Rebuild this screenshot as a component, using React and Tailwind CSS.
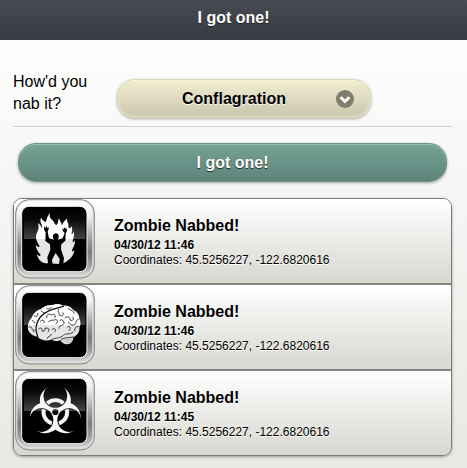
import React from "react";

function IconFrame({ id, label, children }) {
  return (
    <svg viewBox="15 12 240 240" role="img" aria-label={label} className="size-20 shrink-0">
      <defs>
        <linearGradient id={`${id}-metal`} x1="0" y1="0" x2="0" y2="1">
          <stop offset="0" stopColor="#ffffff" />
          <stop offset="0.2" stopColor="#f0f0f0" />
          <stop offset="0.5" stopColor="#a2a2a4" />
          <stop offset="0.68" stopColor="#7c7c7e" />
          <stop offset="0.85" stopColor="#9c9c9e" />
          <stop offset="1" stopColor="#d4d4d4" />
        </linearGradient>
        <linearGradient id={`${id}-gloss`} x1="0" y1="0" x2="0" y2="1">
          <stop offset="0" stopColor="#000000" />
          <stop offset="0.35" stopColor="#080808" />
          <stop offset="1" stopColor="#454545" />
        </linearGradient>
        <linearGradient id={`${id}-ink`} gradientUnits="userSpaceOnUse" x1="0" y1="132" x2="0" y2="133">
          <stop offset="0" stopColor="#ffffff" />
          <stop offset="1" stopColor="#e6e6e6" />
        </linearGradient>
      </defs>
      <rect x="17" y="14" width="236" height="235" rx="40" fill="#d8d8d6" stroke="#858585" strokeWidth="3" />
      <rect x="21" y="17" width="227" height="225" rx="37" fill={`url(#${id}-metal)`} stroke="#e6e6e6" strokeWidth="2" />
      <rect x="35" y="34" width="196" height="196" rx="22" fill="#000000" stroke="#f4f4f4" strokeWidth="3" />
      <path d="M42 132V58Q42 40 60 40H208Q226 40 226 58V132Z" fill={`url(#${id}-gloss)`} />
      {children}
    </svg>
  );
}

function FireIcon() {
  return (
    <IconFrame id="fire" label="Conflagration">
      <path
        fill="url(#fire-ink)"
        d="M106 205C92 202 84 192 80 177C87 184 90 184 92 180C82 168 77 160 77 148C81 156 87 158 89 154C80 138 74 128 81 113C85 106 88 98 84 84C92 90 95 96 95 102C97 96 96 90 92 82C90 76 92 71 94 68C96 76 103 78 106 82C111 76 109 67 120 54C117 66 121 70 127 75C135 84 133 88 139 90C147 85 142 79 147 70C149 79 155 82 155 90C160 88 156 86 161 82C164 75 168 76 172 68C168 80 178 84 175 95C179 102 182 101 184 93C190 103 184 110 185 118C188 117 190 113 190 108C196 122 188 132 188 142C191 142 193 139 195 136C196 152 188 158 185 169C189 170 191 167 193 164C192 180 182 190 174 196C168 203 158 205 152 207Z"
      />
      <path
        fill="#000000"
        d="M103 92L107 100L109 92L112 99L116 97L116 103L113 110L117 130L132 134C128 130 128 119 132 117Q138 113 144 117C147 121 147 129 143 134L158 130L164 114L158 107L157 99L161 104L162 96L166 102L169 97L171 107L167 116L166 137L154 148L153 163L162 190L160 204L164 209H147L149 192L137 174L126 194L128 209H108L114 204L112 187L121 164L120 148L106 138L107 112L102 104Z"
      />
    </IconFrame>
  );
}

function BrainIcon() {
  return (
    <IconFrame id="brain" label="Brain">
      <path
        fill="url(#brain-ink)"
        d="M54 146C52 132 57 118 65 110C70 97 81 87 92 85C100 75 116 71 127 72C138 67 152 68 159 74C172 72 184 79 190 87C202 92 208 102 208 113C214 122 211 136 208 142C210 153 200 165 190 169C190 181 182 190 172 190C162 191 155 184 151 178C142 181 133 180 124 176C110 181 92 178 83 167C72 166 59 158 54 146Z"
      />
      <g fill="none" stroke="#181818" strokeWidth="2.5" strokeLinecap="round" strokeLinejoin="round">
        <path strokeWidth="4" d="M83 167C75 148 77 126 91 108C109 87 133 84 160 76" />
        <path d="M57 138C63 135 66 140 67 146M66 117C70 118 69 126 75 126M71 153C66 148 73 144 76 149M72 104C80 109 84 106 83 97M94 90C102 94 98 98 104 96M110 82C116 87 122 82 125 79" />
        <path d="M91 121C98 112 107 121 101 126M86 144C93 137 98 143 96 150C105 153 107 146 104 142C116 139 121 145 114 153M110 110C108 101 119 96 124 102C132 97 140 103 134 110M116 122C121 114 130 120 135 116C144 115 145 123 138 129M147 84C139 91 150 94 147 101C154 109 164 102 159 95M175 82C181 90 193 87 192 97M165 111C173 103 182 109 180 117C189 122 193 113 188 108M150 119C155 111 163 120 162 128C156 137 145 132 147 142M205 115C195 118 201 126 193 131C184 135 178 128 176 123M208 137C198 134 192 142 195 149M172 138C180 132 185 143 177 149M127 145C134 139 141 147 134 153M112 172C113 163 123 169 124 160M124 176C143 168 149 173 160 163C169 155 179 163 190 153M151 178C157 169 176 171 190 168" />
      </g>
      <g fill="none" stroke="#777777" strokeWidth="1">
        <path d="M156 178C166 176 177 175 188 174M160 183C169 180 179 179 187 178M164 187L181 183" />
      </g>
    </IconFrame>
  );
}

const ANGLES = [0, 120, 240];

function BiohazardIcon() {
  return (
    <IconFrame id="bio" label="Biohazard">
      <defs>
        <mask id="bio-horns" maskUnits="userSpaceOnUse" x="-30" y="-30" width="60" height="60">
          {ANGLES.map((a) => (
            <circle key={a} cy="-11" r="15" fill="white" transform={`rotate(${a})`} />
          ))}
          {ANGLES.map((a) => (
            <circle key={a} cy="-15.5" r="11.5" fill="black" transform={`rotate(${a})`} />
          ))}
          <circle r="3" fill="black" />
        </mask>
        <mask id="bio-ring" maskUnits="userSpaceOnUse" x="-30" y="-30" width="60" height="60">
          {ANGLES.map((a) => (
            <circle key={a} cy="-15.5" r="10.6" fill="white" transform={`rotate(${a})`} />
          ))}
        </mask>
      </defs>
      <g transform="translate(136 135) scale(3.1)">
        <rect x="-30" y="-30" width="60" height="60" fill="#f8f8f8" mask="url(#bio-horns)" />
        <g mask="url(#bio-ring)">
          <circle r="11.5" fill="none" stroke="#f4f4f4" strokeWidth="3.8" />
        </g>
      </g>
    </IconFrame>
  );
}

const ENTRIES = [
  { Icon: FireIcon, time: "04/30/12 11:46", coords: "45.5256227, -122.6820616" },
  { Icon: BrainIcon, time: "04/30/12 11:46", coords: "45.5256227, -122.6820616" },
  { Icon: BiohazardIcon, time: "04/30/12 11:45", coords: "45.5256227, -122.6820616" },
];

export default function App() {
  return (
    <div className="min-h-screen bg-linear-to-b from-white to-[#e8e9e4] font-['Liberation_Sans',Arial,sans-serif] text-base text-black">
      <header className="flex h-10 justify-center bg-linear-to-b from-[#484a53] to-[#393b42] pt-1.5">
        <h1 className="font-bold leading-6 text-white [text-shadow:0_1px_1px_#222]">I got one!</h1>
      </header>
      <main className="pt-[31px] pr-[15px] pb-3 pl-[13px]">
        <form onSubmit={(e) => e.preventDefault()}>
          <div className="flex items-start border-b border-[#d2d2ce] pb-2">
            <label htmlFor="method" className="w-[104px] shrink-0 pr-4 leading-[22px] [text-shadow:0_1px_0_#fff]">
              How'd you nab it?
            </label>
            <div className="relative mt-2 w-[58%] max-w-[254px]">
              <select
                id="method"
                defaultValue="Conflagration"
                className="block h-[39px] w-full appearance-none rounded-[18px] border border-[#d8d5b4] bg-linear-to-b from-[#f1eed2] to-[#c9c6ac] pr-14 pl-9 font-bold shadow-[0_1px_3px_rgba(0,0,0,0.35),inset_0_0_1px_1px_rgba(255,255,220,0.4)] [text-align-last:center] [text-shadow:0_1px_1px_#fff]"
              >
                <option>Conflagration</option>
                <option>Brain</option>
                <option>Biohazard</option>
              </select>
              <svg viewBox="0 0 18 18" aria-hidden="true" className="pointer-events-none absolute top-[11px] right-[17px] size-[18px]">
                <circle cx="9" cy="9" r="9" fill="#807d6c" />
                <path d="M4.6 7.2L9 11.5L13.4 7.2" fill="none" stroke="#ffffff" strokeWidth="3" />
              </svg>
            </div>
          </div>
          <div className="mt-4 px-[5px]">
            <button
              type="submit"
              className="block h-[39px] w-full rounded-[18px] border border-[#6a9287] bg-linear-to-b from-[#75a396] to-[#5e837a] font-bold text-white shadow-[0_1px_3px_rgba(0,0,0,0.35),inset_0_1px_0_rgba(255,255,255,0.3)] [text-shadow:0_1px_1px_#222]"
            >
              I got one!
            </button>
          </div>
        </form>
        <ul className="mt-4 divide-y-2 divide-[#868480] overflow-hidden rounded-[9px] border border-[#7b7b79] shadow-[0_1px_3px_rgba(0,0,0,0.35)]">
          {ENTRIES.map(({ Icon, time, coords }, i) => (
            <li key={i} className="bg-[#868480]">
              <div className="flex h-[84px] items-start gap-[19px] bg-linear-to-b from-white to-[#d8d7d0] pl-px [text-shadow:0_1px_0_#fff]">
                <Icon />
                <div className="pt-[15px] text-xs leading-[15px]">
                  <h3 className="text-base font-bold leading-6">Zombie Nabbed!</h3>
                  <p className="font-bold">{time}</p>
                  <p>Coordinates: {coords}</p>
                </div>
              </div>
            </li>
          ))}
        </ul>
      </main>
    </div>
  );
}
